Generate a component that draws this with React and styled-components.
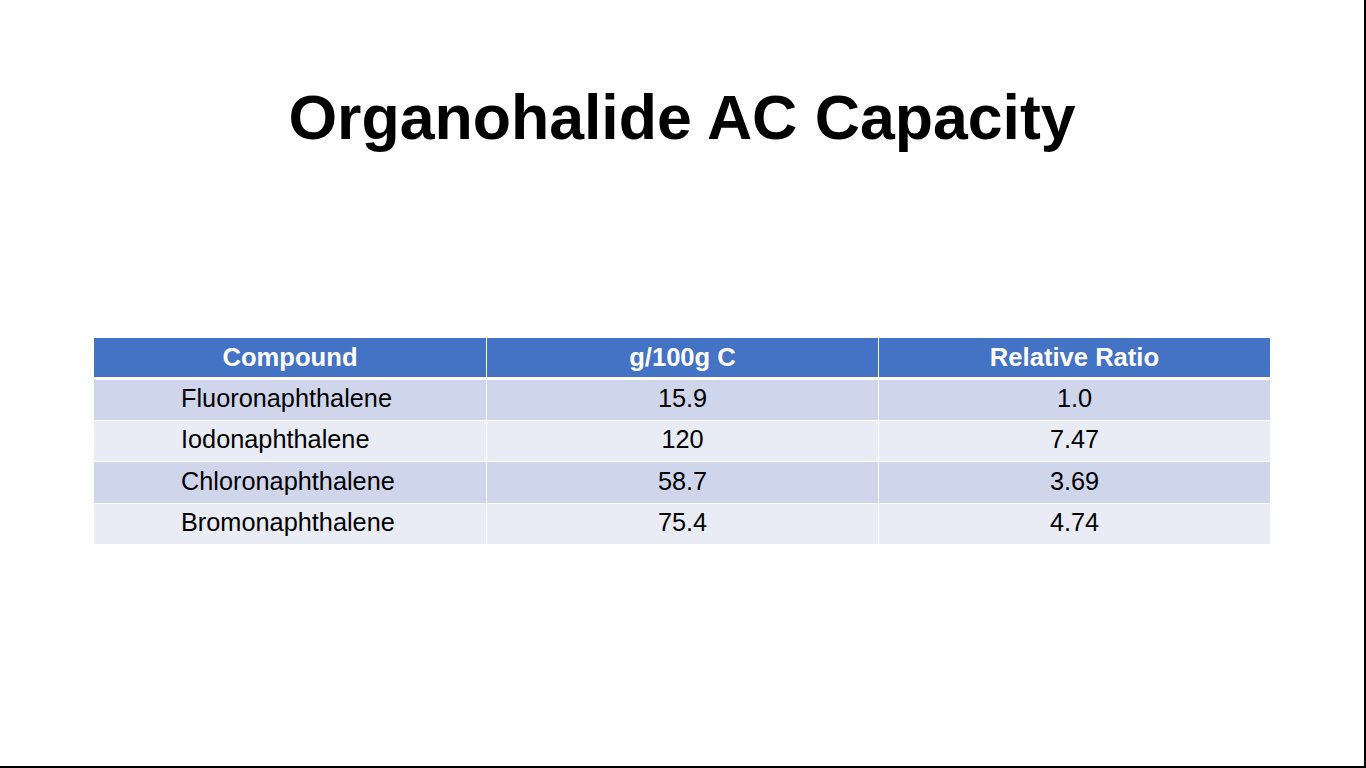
import React from "react";
import styled, { createGlobalStyle } from "styled-components";

const Global = createGlobalStyle`
  html, body { margin: 0; padding: 0; background: #ffffff; }
  body { font-family: "Liberation Sans", Arial, sans-serif; }
`;

const Slide = styled.div`
  box-sizing: border-box;
  width: 1366px;
  height: 768px;
  background: #ffffff;
  border-right: 2px solid #000000;
  border-bottom: 2px solid #000000;
  display: flex;
  flex-direction: column;
  align-items: center;
  overflow: hidden;
`;

const Title = styled.h1`
  margin: 0;
  padding-top: 81px;
  font-family: "Liberation Sans", Arial, sans-serif;
  font-weight: 700;
  font-size: 62.6px;
  line-height: 72px;
  color: #000000;
  text-align: center;
`;

const Table = styled.div`
  margin-top: 185px;
  display: grid;
  grid-template-columns: 392px 391px 391px;
  grid-template-rows: 42px 41px 41px 42px 40px;
  column-gap: 1px;
  width: 1176px;
`;

const HeaderCell = styled.div`
  border-bottom: 3px solid #ffffff;
  background: #4472c4;
  color: #ffffff;
  font-weight: 700;
  font-size: 25.6px;
  display: flex;
  align-items: center;
  justify-content: center;
`;

const Cell = styled.div`
  border-bottom: ${(p) => (p.$last ? "0" : "1px solid #ffffff")};
  background: ${(p) => (p.$odd ? "#cfd5ea" : "#e9ebf5")};
  background-clip: padding-box;
  color: #000000;
  font-size: 25.3px;
  display: flex;
  align-items: center;
  justify-content: ${(p) => (p.$left ? "flex-start" : "center")};
  padding-left: ${(p) => (p.$left ? "87px" : "0")};
  padding-bottom: ${(p) => (p.$pb ? p.$pb : "3px")};
  box-sizing: border-box;
`;

const rows = [
  ["Fluoronaphthalene", "15.9", "1.0"],
  ["Iodonaphthalene", "120", "7.47"],
  ["Chloronaphthalene", "58.7", "3.69"],
  ["Bromonaphthalene", "75.4", "4.74"],
];

export default function App() {
  return (
    <>
      <Global />
      <Slide>
        <Title>Organohalide AC Capacity</Title>
        <Table>
          <HeaderCell>Compound</HeaderCell>
          <HeaderCell>g/100g C</HeaderCell>
          <HeaderCell>Relative Ratio</HeaderCell>
          {rows.map((r, i) =>
            r.map((v, j) => (
              <Cell
                key={`${i}-${j}`}
                $odd={i % 2 === 0}
                $left={j === 0}
                $last={i === rows.length - 1}
                $pb={i === 2 ? "2px" : undefined}
              >
                {v}
              </Cell>
            ))
          )}
        </Table>
      </Slide>
    </>
  );
}
